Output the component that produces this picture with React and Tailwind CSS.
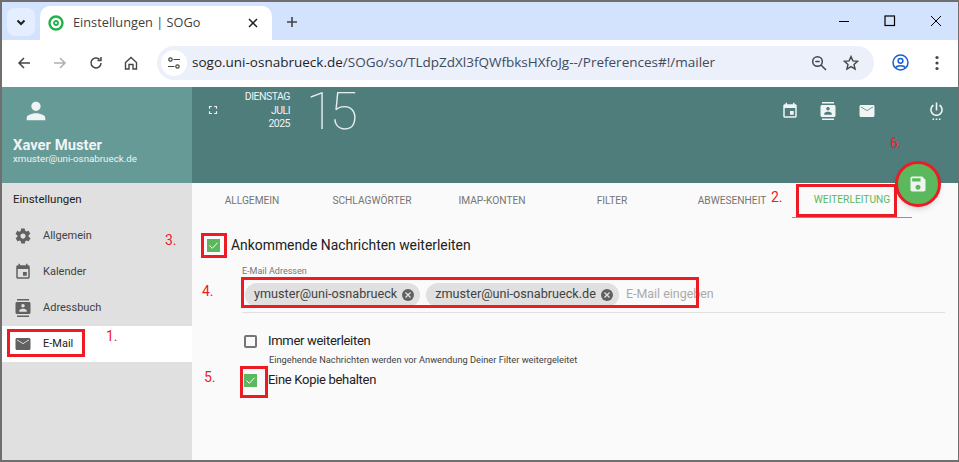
import React from "react";

const Ic = ({ d, className = "", size = 24 }) => (
  <svg width={size} height={size} viewBox="0 0 24 24" fill="currentColor" className={className}>
    <path d={d} />
  </svg>
);
const P = {
  person: "M12 12c2.2 0 4-1.8 4-4s-1.8-4-4-4-4 1.8-4 4 1.8 4 4 4zm0 2c-2.7 0-8 1.3-8 4v2h16v-2c0-2.7-5.3-4-8-4z",
  gear: "M19.4 13c0-.3.1-.6.1-1s0-.7-.1-1l2.1-1.6c.2-.2.2-.4.1-.6l-2-3.5c-.1-.2-.4-.3-.6-.2l-2.5 1c-.5-.4-1.1-.7-1.7-1l-.4-2.6c0-.2-.2-.4-.5-.4h-4c-.3 0-.5.2-.5.4l-.4 2.7c-.6.2-1.1.6-1.7 1l-2.5-1c-.2-.1-.5 0-.6.2l-2 3.5c-.1.2-.1.4.1.6L4.6 11c0 .3-.1.6-.1 1s0 .7.1 1l-2.1 1.6c-.2.2-.2.4-.1.6l2 3.5c.1.2.4.3.6.2l2.5-1c.5.4 1.1.7 1.7 1l.4 2.6c0 .2.2.4.5.4h4c.3 0 .5-.2.5-.4l.4-2.6c.6-.3 1.2-.6 1.7-1l2.5 1c.2.1.5 0 .6-.2l2-3.5c.1-.2.1-.4-.1-.6L19.4 13zM12 15.5c-1.9 0-3.5-1.6-3.5-3.5s1.6-3.5 3.5-3.5 3.5 1.6 3.5 3.5-1.6 3.5-3.5 3.5z",
  cal: "M17 12h-5v5h5v-5zM16 1v2H8V1H6v2H5c-1.1 0-2 .9-2 2v14c0 1.1.9 2 2 2h14c1.1 0 2-.9 2-2V5c0-1.1-.9-2-2-2h-1V1h-2zm3 18H5V8h14v11z",
  book: "M4 0h16v2H4V0zm0 22h16v2H4v-2zM20 4H4c-1.1 0-2 .9-2 2v12c0 1.1.9 2 2 2h16c1.1 0 2-.9 2-2V6c0-1.1-.9-2-2-2zm-8 2.8c1.2 0 2.3 1 2.3 2.2s-1 2.3-2.3 2.3-2.3-1-2.3-2.3 1-2.2 2.3-2.2zM17 17H7v-1.5c0-1.7 3.3-2.5 5-2.5s5 .8 5 2.5V17z",
  mail: "M20 4H4c-1.1 0-2 .9-2 2v12c0 1.1.9 2 2 2h16c1.1 0 2-.9 2-2V6c0-1.1-.9-2-2-2zm0 3l-8 5-8-5V6l8 5 8-5v1z",
  power: "M7 24h2v-2H7v2zm4 0h2v-2h-2v2zm2-22h-2v10h2V2zm3.56 2.44l-1.45 1.45C16.84 6.94 18 8.83 18 11c0 3.31-2.69 6-6 6s-6-2.69-6-6c0-2.17 1.16-4.06 2.88-5.12L7.44 4.44C5.36 5.88 4 8.28 4 11c0 4.42 3.58 8 8 8s8-3.58 8-8c0-2.72-1.36-5.12-3.44-6.56zM15 24h2v-2h-2v2z",
  save: "M17 3H5c-1.1 0-2 .9-2 2v14c0 1.1.9 2 2 2h14c1.1 0 2-.9 2-2V7l-4-4zm-5 16c-1.7 0-3-1.3-3-3s1.3-3 3-3 3 1.3 3 3-1.3 3-3 3zm3-10H5V5h10v4z",
  full: "M7 14H5v5h5v-2H7v-3zM5 10h2V7h3V5H5v5zm12 7h-3v2h5v-5h-2v3zM14 5v2h3v3h2V5h-5z",
};

const Check = ({ on }) =>
  on ? (
    <span className="flex h-[13px] w-[13px] shrink-0 items-center justify-center bg-[#5cb85c]">
      <svg width="11" height="11" viewBox="0 0 11 11" fill="none" stroke="#fff" strokeWidth="1">
        <path d="M1.5 5.5 L4.3 8.3 L9.5 2.8" />
      </svg>
    </span>
  ) : (
    <span className="block h-[13px] w-[13px] shrink-0 rounded-[2px] border-2 border-[#757575]" />
  );

const Chip = ({ children }) => (
  <span className="flex h-[24px] items-center gap-[5px] rounded-full bg-[#e0e0e0] pl-[9px] pr-[6px] text-[12.65px] text-[#424242]">
    {children}
    <span className="flex h-[12px] w-[12px] items-center justify-center rounded-full bg-[#616161]">
      <svg width="8" height="8" viewBox="0 0 8 8" stroke="#e0e0e0" strokeWidth="1.3">
        <path d="M1.5 1.5 L6.5 6.5 M6.5 1.5 L1.5 6.5" />
      </svg>
    </span>
  </span>
);

const Tab = ({ children, active }) => (
  <div
    className={`flex h-[35px] w-[120px] items-center justify-center text-[10.2px] ${
      active ? "border-b border-[#5cb85c] text-[#5cb85c]" : "text-[#757575]"
    }`}
  >
    {children}
  </div>
);

const NavItem = ({ icon, children, active }) => (
  <div className={`flex h-[36px] items-center pl-[12px] text-[11px] ${active ? "bg-white text-[#212121]" : "text-[#424242]"}`}>
    <Ic d={icon} size={18} className="text-[#616161]" />
    <span className="ml-[11px]">{children}</span>
  </div>
);

const Box = ({ className }) => <div className={`absolute border-[3px] border-[#ed1c24] ${className}`} />;
const Num = ({ className, children }) => (
  <div className={`absolute text-[14px] leading-none text-[#ed1c24] ${className}`}>{children}</div>
);

export default function App() {
  return (
    <div
      className="relative flex h-[462px] w-[959px] flex-col overflow-hidden border-l-2 border-t-2 border-b-2 border-r border-[#6f6f6f] bg-[#fafafa]"
      style={{ fontFamily: 'Roboto, sans-serif' }}
    >
      {/* Tab strip */}
      <div className="flex h-[38px] shrink-0 items-end bg-[#d3e3fd] pl-[5px]">
        <div className="mb-[4px] flex h-[28px] w-[28px] items-center justify-center rounded-lg bg-[#e4eefe] text-[#1f1f1f]">
          <svg width="12" height="12" viewBox="0 0 12 12" fill="none" stroke="currentColor" strokeWidth="2">
            <path d="M2.5 4.5 L6 8 L9.5 4.5" />
          </svg>
        </div>
        <div className="ml-[5px] flex h-[34px] w-[232px] items-center rounded-t-[10px] bg-white pl-[8px] text-[12.75px] text-[#3c4043]">
          <svg width="16" height="16" viewBox="0 0 16 16" fill="none" stroke="#22b14c" strokeWidth="2.4">
            <circle cx="8" cy="8" r="6.5" />
            <circle cx="8" cy="8" r="2" strokeWidth="1.8" />
          </svg>
          <span className="ml-[9px]" style={{ fontFamily: '"Open Sans", sans-serif' }}>Einstellungen | SOGo</span>
          <svg width="10" height="10" viewBox="0 0 10 10" stroke="#1f1f1f" strokeWidth="1.5" className="ml-auto mr-[14px]">
            <path d="M1 1 L9 9 M9 1 L1 9" />
          </svg>
        </div>
        <svg width="12" height="12" viewBox="0 0 12 12" stroke="#444" strokeWidth="1.6" className="mb-[12px] ml-[14px]">
          <path d="M6 1 V11 M1 6 H11" />
        </svg>
        <div className="ml-auto mb-[13px] flex items-center">
          <svg width="12" height="12" viewBox="0 0 12 12" stroke="#000" strokeWidth="1" className="mr-[34px]">
            <path d="M1 6.5 H11" />
          </svg>
          <svg width="12" height="12" viewBox="0 0 12 12" stroke="#000" strokeWidth="1.2" fill="none" className="mr-[34px]">
            <rect x="1" y="1" width="9.5" height="9.5" />
          </svg>
          <svg width="12" height="12" viewBox="0 0 12 12" stroke="#000" strokeWidth="1" className="mr-[16px]">
            <path d="M1 1 L11 11 M11 1 L1 11" />
          </svg>
        </div>
      </div>

      {/* Toolbar */}
      <div className="flex h-[47px] shrink-0 items-center rounded-t-[8px] bg-white pb-[2px] text-[#444746]">
        <svg width="14" height="14" viewBox="0 0 14 14" fill="none" stroke="currentColor" strokeWidth="1.5" className="ml-[15px]">
          <path d="M13 7 H2 M7 2 L2 7 L7 12" />
        </svg>
        <svg width="14" height="14" viewBox="0 0 14 14" fill="none" stroke="#b0b0b0" strokeWidth="1.5" className="ml-[22px]">
          <path d="M1 7 H12 M7 2 L12 7 L7 12" />
        </svg>
        <svg width="14" height="14" viewBox="0 0 14 14" fill="none" stroke="currentColor" strokeWidth="1.5" className="ml-[22px]">
          <path d="M12 7 A5 5 0 1 1 10.5 3.4 M12 1 V4.5 H8.5" />
        </svg>
        <svg width="14" height="14" viewBox="0 0 14 14" fill="none" stroke="currentColor" strokeWidth="1.4" className="ml-[21px]">
          <path d="M1.5 6.5 L7 1.5 L12.5 6.5 V13 H9 V8.5 H5 V13 H1.5 Z" />
        </svg>
        <div className="ml-[19px] flex h-[34px] w-[717px] items-center rounded-full bg-[#ebf0fa] pl-[4px]">
          <span className="flex h-[26px] w-[26px] items-center justify-center rounded-full bg-white">
            <svg width="14" height="14" viewBox="0 0 14 14" fill="none" stroke="currentColor" strokeWidth="1.2">
              <circle cx="3.5" cy="3.5" r="1.7" />
              <path d="M6.5 3.5 H13 M1 10.5 H7.5" />
              <circle cx="10.5" cy="10.5" r="1.7" />
            </svg>
          </span>
          <span className="ml-[5px] text-[13.5px] text-[#3f4a5a]" style={{ fontFamily: '"Open Sans", sans-serif' }}>
            <span className="text-[#1f1f1f]">sogo.uni-osnabrueck.de</span>/SOGo/so/TLdpZdXl3fQWfbksHXfoJg--/Preferences#!/mailer
          </span>
          <svg width="16" height="16" viewBox="0 0 16 16" fill="none" stroke="currentColor" strokeWidth="1.5" className="ml-auto">
            <circle cx="6.5" cy="6.5" r="4.8" />
            <path d="M10 10 L15 15 M4.3 6.5 H8.7" />
          </svg>
          <svg width="16" height="16" viewBox="0 0 16 16" fill="none" stroke="currentColor" strokeWidth="1.4" className="ml-[16px] mr-[15px]">
            <path d="M8 1.6 L9.9 5.9 L14.6 6.3 L11 9.4 L12.1 14 L8 11.6 L3.9 14 L5 9.4 L1.4 6.3 L6.1 5.9 Z" />
          </svg>
        </div>
        <svg width="17" height="17" viewBox="0 0 17 17" fill="none" stroke="#1a5fd0" strokeWidth="1.5" className="ml-[18px]">
          <circle cx="8.5" cy="8.5" r="7.5" />
          <circle cx="8.5" cy="6.8" r="2.4" />
          <path d="M3.8 13.6 C5 11 12 11 13.2 13.6" />
        </svg>
        <svg width="4" height="16" viewBox="0 0 4 16" fill="currentColor" className="ml-[26px]">
          <circle cx="2" cy="2.5" r="1.6" />
          <circle cx="2" cy="8" r="1.6" />
          <circle cx="2" cy="13.5" r="1.6" />
        </svg>
      </div>

      {/* App */}
      <div className="flex min-h-0 flex-1">
        <aside className="flex w-[190px] shrink-0 flex-col bg-[#e0e0e0]">
          <div className="h-[96px] bg-[#669a97] pl-[11px] pt-[10px] text-[#f0f4f4]">
            <Ic d={P.person} size={28} className="ml-[9px]" />
            <div className="mt-[11px] text-[14.8px] font-bold leading-[18px]">Xaver Muster</div>
            <div className="mt-[-2px] text-[9.75px] leading-[13px]">xmuster@uni-osnabrueck.de</div>
          </div>
          <div className="flex h-[34px] items-center pl-[11px] text-[11.5px] text-[#212121]">Einstellungen</div>
          <div className="pt-[1px]">
            <NavItem icon={P.gear}>Allgemein</NavItem>
            <NavItem icon={P.cal}>Kalender</NavItem>
            <NavItem icon={P.book}>Adressbuch</NavItem>
            <NavItem icon={P.mail} active>E-Mail</NavItem>
          </div>
        </aside>

        <main className="flex min-w-0 flex-1 flex-col">
          <header className="relative flex h-[96px] shrink-0 items-start bg-[#4e7d7c] text-[#f0f4f4]">
            <Ic d={P.full} size={14} className="ml-[14px] mt-[16px]" />
            <div className="ml-[20px] mt-[3px] w-[50px] text-right text-[10.5px] leading-[13.5px] tracking-[-0.5px]">
              <div>DIENSTAG</div>
              <div>JULI</div>
              <div>2025</div>
            </div>
            <div className="ml-[16px] mt-[-3px] text-[52px] font-thin leading-[56px] tracking-[-5px] text-[#e5eded]">15</div>
            <div className="ml-auto mr-[12px] mt-[14px] flex items-center">
              <Ic d={P.cal} size={18} />
              <Ic d={P.book} size={18} className="ml-[20px]" />
              <Ic d={P.mail} size={18} className="ml-[21px]" />
              <Ic d={P.power} size={19} className="ml-[51px]" />
            </div>
          </header>

          <nav className="flex shrink-0">
            <Tab>ALLGEMEIN</Tab>
            <Tab>SCHLAGWÖRTER</Tab>
            <Tab>IMAP-KONTEN</Tab>
            <Tab>FILTER</Tab>
            <Tab>ABWESENHEIT</Tab>
            <Tab active>WEITERLEITUNG</Tab>
          </nav>

          <section className="flex-1 pl-[15px] pr-[13px] pt-[17px]">
            <div className="flex h-[20px] items-center text-[13.9px] text-[#212121]">
              <Check on />
              <span className="ml-[11px]">Ankommende Nachrichten weiterleiten</span>
            </div>
            <div className="ml-[35px] mt-[10px] text-[9px] leading-[12px] text-[#757575]">E-Mail Adressen</div>
            <div className="ml-[35px] mt-[3px] flex h-[33px] items-center gap-[6px] border-b border-[#e0e0e0] pb-[3px] pl-[3px]">
              <Chip>ymuster@uni-osnabrueck</Chip>
              <Chip>zmuster@uni-osnabrueck.de</Chip>
              <span className="ml-[1px] text-[12.45px] text-[#aaaaaa]">E-Mail eingeben</span>
            </div>
            <div className="ml-[37px] mt-[18px] flex h-[20px] items-center text-[13px] tracking-[-0.3px] text-[#212121]">
              <Check />
              <span className="ml-[11px]">Immer weiterleiten</span>
            </div>
            <div className="ml-[62px] mt-[3px] text-[9.25px] leading-[12px] text-[#424242]">
              Eingehende Nachrichten werden vor Anwendung Deiner Filter weitergeleitet
            </div>
            <div className="ml-[37px] mt-[4px] flex h-[20px] items-center text-[13px] tracking-[-0.3px] text-[#212121]">
              <Check on />
              <span className="ml-[11px]">Eine Kopie behalten</span>
            </div>
          </section>
        </main>
      </div>

      {/* Floating save button */}
      <div className="absolute left-[893px] top-[159px] flex h-[46px] w-[46px] items-center justify-center rounded-full border-[3px] border-[#ed1c24] bg-[#5cb85c] text-[#eef5ee] shadow-md">
        <Ic d={P.save} size={20} />
      </div>

      {/* Red annotations */}
      <Box className="left-[5px] top-[327px] h-[28px] w-[78px]" />
      <Box className="left-[794px] top-[182px] h-[33px] w-[101px]" />
      <Box className="left-[199px] top-[231px] h-[25px] w-[26px]" />
      <Box className="left-[239px] top-[275px] h-[31px] w-[458px]" />
      <Box className="left-[238px] top-[364px] h-[32px] w-[28px]" />
      <Num className="left-[104px] top-[327px]">1.</Num>
      <Num className="left-[769px] top-[188px]">2.</Num>
      <Num className="left-[163px] top-[231px]">3.</Num>
      <Num className="left-[200px] top-[282px]">4.</Num>
      <Num className="left-[202px] top-[368px]">5.</Num>
      <Num className="left-[888px] top-[134px]">6.</Num>
    </div>
  );
}
